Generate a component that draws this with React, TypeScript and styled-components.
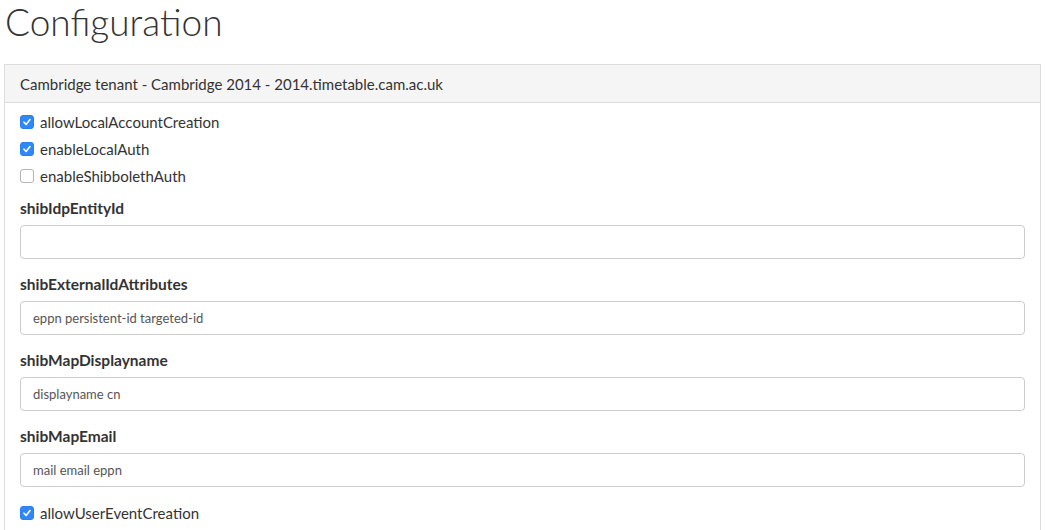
import React from 'react';
import styled, { createGlobalStyle } from 'styled-components';

type Field =
  | { kind: 'check'; name: string; checked: boolean }
  | { kind: 'text'; name: string; value: string };

const fields: Field[] = [
  { kind: 'check', name: 'allowLocalAccountCreation', checked: true },
  { kind: 'check', name: 'enableLocalAuth', checked: true },
  { kind: 'check', name: 'enableShibbolethAuth', checked: false },
  { kind: 'text', name: 'shibIdpEntityId', value: '' },
  { kind: 'text', name: 'shibExternalIdAttributes', value: 'eppn persistent-id targeted-id' },
  { kind: 'text', name: 'shibMapDisplayname', value: 'displayname cn' },
  { kind: 'text', name: 'shibMapEmail', value: 'mail email eppn' },
  { kind: 'check', name: 'allowUserEventCreation', checked: true },
];

const GlobalStyle = createGlobalStyle`
  html, body {
    margin: 0;
    padding: 0;
    background: #fff;
    overflow: hidden;
  }
  body {
    font-family: Lato, "Open Sans", sans-serif;
    font-size: 15px;
    color: #333;
  }
`;

const CheckMark = () => (
  <svg width="10" height="10" viewBox="0 0 10 10">
    <path d="M2 5.2 L4.1 7.4 L8 2.6" fill="none" stroke="#fff" strokeWidth="1.6" strokeLinecap="round" strokeLinejoin="round" />
  </svg>
);

const App: React.FC = () => {
  return (
    <Page>
      <GlobalStyle />
      <Title>Configuration</Title>
      <Panel>
        <PanelHeading>Cambridge tenant - Cambridge 2014 - 2014.timetable.cam.ac.uk</PanelHeading>
        <PanelBody>
          {fields.map((f) =>
            f.kind === 'check' ? (
              <CheckRow key={f.name}>
                <Box checked={f.checked}>{f.checked && <CheckMark />}</Box>
                <span>{f.name}</span>
              </CheckRow>
            ) : (
              <FormGroup key={f.name}>
                <Label>{f.name}</Label>
                <Input>{f.value}</Input>
              </FormGroup>
            ),
          )}
        </PanelBody>
      </Panel>
    </Page>
  );
};

const Page = styled.div`
  height: 530px;
  overflow: hidden;
  padding: 0 5px 0 4px;
  display: flex;
  flex-direction: column;
`;

const Title = styled.h1`
  margin: 0;
  height: 64px;
  flex-shrink: 0;
  padding-left: 1px;
  font-family: Lato, sans-serif;
  font-weight: 300;
  font-size: 37px;
  line-height: 43px;
  color: #333;
`;

const Panel = styled.div`
  flex: 1;
  border: 1px solid #ddd;
  border-bottom: none;
  background: #fff;
`;

const PanelHeading = styled.div`
  height: 37px;
  padding: 0 15px;
  display: flex;
  align-items: center;
  background: #f5f5f5;
  border-bottom: 1px solid #ddd;
  color: #333;
`;

const PanelBody = styled.div`
  padding: 8px 15px 0 15px;
  display: flex;
  flex-direction: column;
`;

const CheckRow = styled.label`
  display: flex;
  align-items: center;
  gap: 6px;
  height: 22px;
  margin-bottom: 5px;
  & + div {
    margin-top: 6px;
  }
`;

const Box = styled.span<{ checked: boolean }>`
  width: 14px;
  height: 14px;
  box-sizing: border-box;
  border-radius: 3px;
  display: inline-flex;
  align-items: center;
  justify-content: center;
  background: ${({ checked }) => (checked ? '#2f88f7' : '#fff')};
  border: ${({ checked }) => (checked ? '1px solid #2a7fec' : '1px solid #b5b5b5')};
`;

const FormGroup = styled.div`
  display: flex;
  flex-direction: column;
  margin-bottom: 15px;
`;

const Label = styled.div`
  font-weight: 700;
  font-size: 15.5px;
  height: 22px;
  line-height: 21px;
  margin-bottom: 5px;
`;

const Input = styled.div`
  height: 34px;
  box-sizing: border-box;
  border: 1px solid #ccc;
  border-radius: 4px;
  padding: 0 12px;
  display: flex;
  align-items: center;
  font-size: 13px;
  color: #555;
`;

export default App;
